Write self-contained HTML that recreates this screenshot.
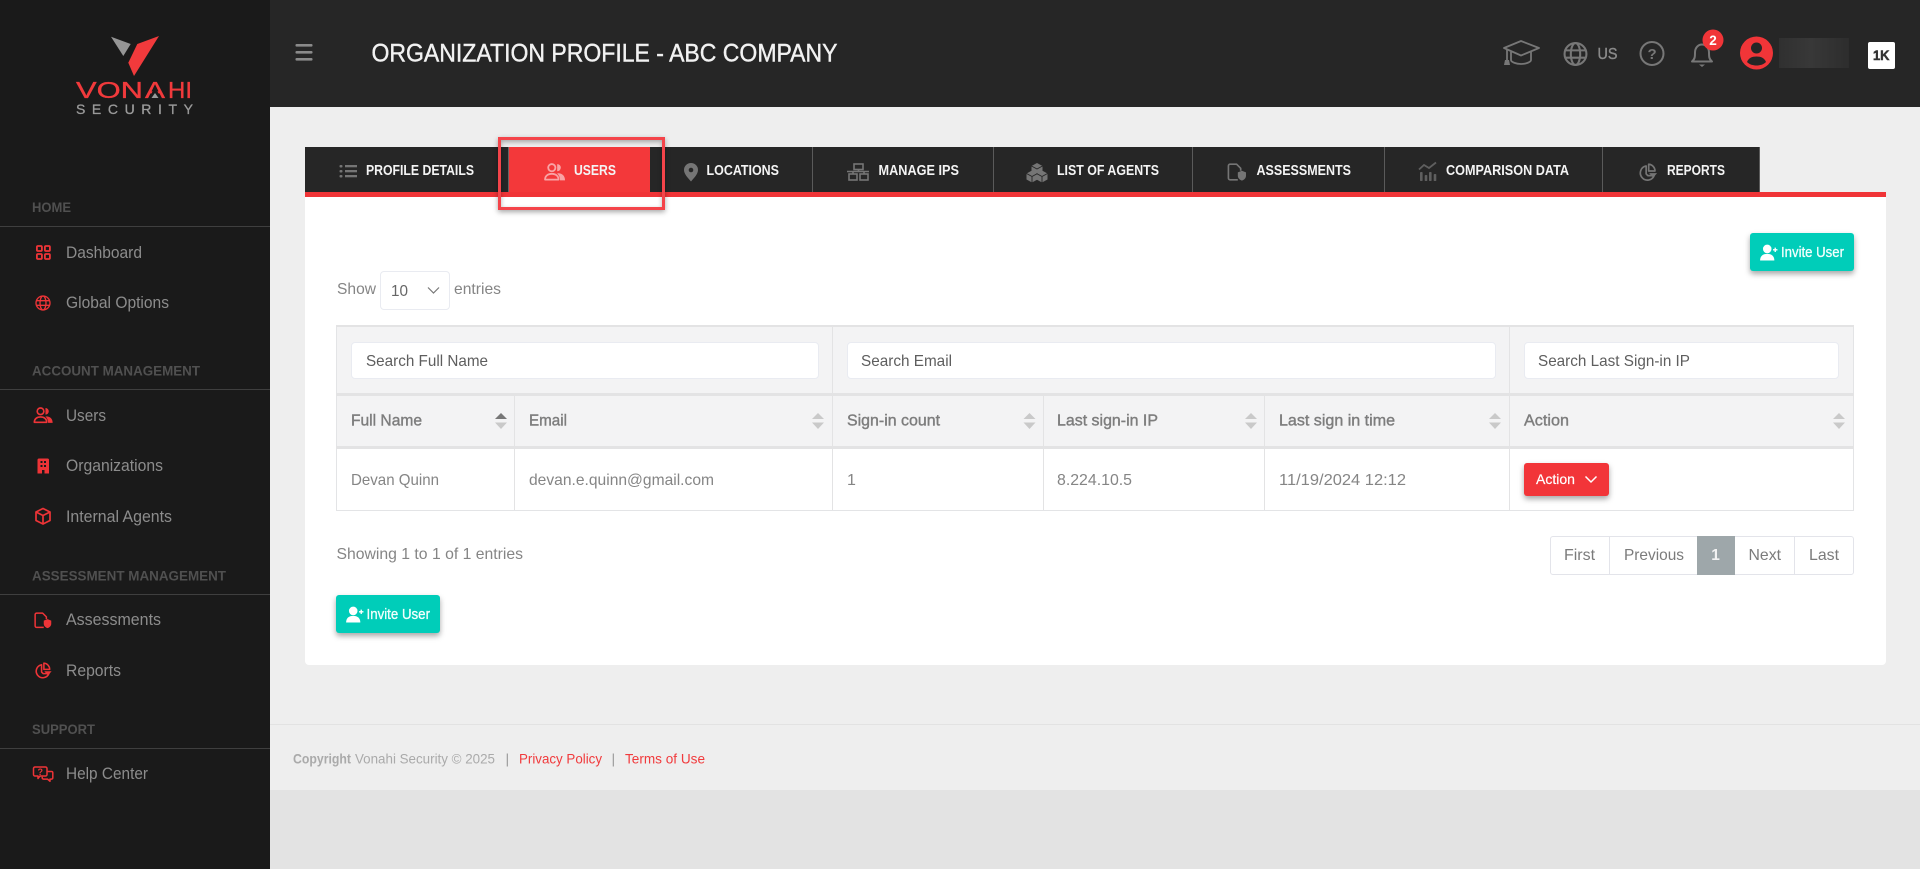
<!DOCTYPE html>
<html lang="en">
<head>
<meta charset="utf-8">
<title>Organization Profile - ABC Company</title>
<style>
html,body{margin:0;padding:0;width:1920px;height:869px;overflow:hidden;background:#eee;font-family:"Liberation Sans",sans-serif}
.b{position:absolute;box-sizing:border-box}
svg#t{position:absolute;left:0;top:0}
svg#t text{font-family:"Liberation Sans",sans-serif}
.nav{font-size:16.5px;fill:#8c8c8c}
.sec{font-size:13.5px;font-weight:700;fill:#505050}
.tab{font-size:14.5px;font-weight:700;fill:#f4f4f4}
.th{font-size:16px;fill:#7d7d7d;stroke:#7d7d7d;stroke-width:.4px}
.td{font-size:16px;fill:#858585}
.ph{font-size:16px;fill:#5e5e5e}
.pg{font-size:16px;fill:#7b7b7b}
.ft{font-size:14px;fill:#aaa}
.inv{font-size:15px;fill:#f2fffd;stroke:#f2fffd;stroke-width:.3px}
</style>
</head>
<body>
<div class="b" style="left:0;top:0;width:270px;height:869px;background:#1a1a1a"></div>
<div class="b" style="left:0;top:226px;width:270px;height:1px;background:#3f3f3f"></div>
<div class="b" style="left:0;top:389px;width:270px;height:1px;background:#3f3f3f"></div>
<div class="b" style="left:0;top:594px;width:270px;height:1px;background:#3f3f3f"></div>
<div class="b" style="left:0;top:748px;width:270px;height:1px;background:#3f3f3f"></div>
<div class="b" style="left:270px;top:0;width:1650px;height:107px;background:#262626"></div>
<div class="b" style="left:1779px;top:38px;width:70px;height:30px;background:linear-gradient(90deg,#303030,#383838 45%,#2d2d2d)"></div>
<div class="b" style="left:1868px;top:42px;width:27px;height:27px;background:#fff;border-radius:2px"></div>

<div class="b" style="left:305px;top:197px;width:1581px;height:468px;background:#fff;border-radius:0 0 4px 4px"></div>
<div class="b" style="left:305px;top:147px;width:1454px;height:45px;background:#262626"></div>
<div class="b" style="left:508px;top:147px;width:1px;height:45px;background:#666"></div>
<div class="b" style="left:509px;top:147px;width:141px;height:45px;background:#f3383a"></div>
<div class="b" style="left:812px;top:147px;width:1px;height:45px;background:#5a5a5a"></div>
<div class="b" style="left:993px;top:147px;width:1px;height:45px;background:#5a5a5a"></div>
<div class="b" style="left:1192px;top:147px;width:1px;height:45px;background:#5a5a5a"></div>
<div class="b" style="left:1384px;top:147px;width:1px;height:45px;background:#5a5a5a"></div>
<div class="b" style="left:1602px;top:147px;width:1px;height:45px;background:#5a5a5a"></div>
<div class="b" style="left:1759px;top:147px;width:1px;height:45px;background:#5a5a5a"></div>
<div class="b" style="left:305px;top:192px;width:1581px;height:5px;background:#f03437"></div>
<div class="b" style="left:498px;top:137px;width:167px;height:73px;border:3px solid #f4444a;box-shadow:0 2px 5px rgba(0,0,0,.35),inset 0 2px 5px rgba(0,0,0,.3)"></div>

<div class="b" style="left:1750px;top:233px;width:104px;height:38px;background:#00cdb9;border-radius:3px;box-shadow:0 3px 6px rgba(0,0,0,.35)"></div>
<div class="b" style="left:380px;top:271px;width:70px;height:39px;background:#fff;border:1px solid #e9ebf1;border-radius:4px"></div>

<div class="b" style="left:336px;top:325px;width:1518px;height:186px;background:#fff;border:1px solid #e3e4e6"></div>
<div class="b" style="left:337px;top:326px;width:1516px;height:120px;background:#f3f3f4"></div>
<div class="b" style="left:336px;top:325px;width:1518px;height:2px;background:#e3e3e4"></div>
<div class="b" style="left:336px;top:393px;width:1518px;height:3px;background:#e3e3e4"></div>
<div class="b" style="left:336px;top:446px;width:1518px;height:3px;background:#e3e3e4"></div>
<div class="b" style="left:514px;top:396px;width:1px;height:114px;background:#e3e3e4"></div>
<div class="b" style="left:832px;top:327px;width:1px;height:183px;background:#e3e3e4"></div>
<div class="b" style="left:1043px;top:396px;width:1px;height:114px;background:#e3e3e4"></div>
<div class="b" style="left:1264px;top:396px;width:1px;height:114px;background:#e3e3e4"></div>
<div class="b" style="left:1509px;top:327px;width:1px;height:183px;background:#e3e3e4"></div>
<div class="b" style="left:351px;top:342px;width:468px;height:37px;background:#fff;border:1px solid #e9ebf1;border-radius:4px"></div>
<div class="b" style="left:847px;top:342px;width:649px;height:37px;background:#fff;border:1px solid #e9ebf1;border-radius:4px"></div>
<div class="b" style="left:1524px;top:342px;width:315px;height:37px;background:#fff;border:1px solid #e9ebf1;border-radius:4px"></div>
<div class="b" style="left:1524px;top:463px;width:85px;height:33px;background:#f23539;border-radius:3px;box-shadow:0 3px 6px rgba(0,0,0,.35)"></div>

<div class="b" style="left:1550px;top:536px;width:304px;height:39px;background:#fff;border:1px solid #e3e4ea;border-radius:3px"></div>
<div class="b" style="left:1609px;top:536px;width:1px;height:39px;background:#e3e4ea"></div>
<div class="b" style="left:1697px;top:536px;width:38px;height:39px;background:#9ea7aa"></div>
<div class="b" style="left:1794px;top:536px;width:1px;height:39px;background:#e3e4ea"></div>
<div class="b" style="left:336px;top:595px;width:104px;height:38px;background:#00cdb9;border-radius:3px;box-shadow:0 3px 6px rgba(0,0,0,.35)"></div>

<div class="b" style="left:270px;top:724px;width:1650px;height:1px;background:#e2e2e2"></div>
<div class="b" style="left:270px;top:790px;width:1650px;height:79px;background:#e3e3e3"></div>

<svg id="t" width="1920" height="869" viewBox="0 0 1920 869" xmlns="http://www.w3.org/2000/svg">
<defs>
<symbol id="users" viewBox="0 0 24 20"><circle cx="9" cy="5.2" r="4" fill="none" stroke="currentColor" stroke-width="2"/><path d="M15 1.2a4 4 0 1 1 0 8z" fill="currentColor"/><path d="M1.5 18.500c0-4 3-6.500 7.500-6.500s7.500 2.500 7.500 6.500z" fill="none" stroke="currentColor" stroke-width="2" stroke-linejoin="round"/><path d="M15 11.500c5-.6 8.700 2.400 8.700 7.800h-5.500c0-3-1.200-5.800-3.200-7.800z" fill="currentColor"/></symbol>
<symbol id="doc" viewBox="0 0 24 22"><path d="M13 20.500H3.500a2 2 0 0 1-2-2v-15a2 2 0 0 1 2-2h8l5 5v3" fill="none" stroke="currentColor" stroke-width="2" stroke-linejoin="round"/><path d="M18 9.500l5 2v4c0 3-2.200 5.200-5 6-2.800-.8-5-3-5-6v-4z" fill="currentColor"/></symbol>
<symbol id="pie" viewBox="0 0 22 22"><path d="M8.500 3.500a8.500 8.500 0 1 0 9.500 11.500h-7.500l-2-2z" fill="none" stroke="currentColor" stroke-width="2" stroke-linejoin="round"/><path d="M11.500 1.500a8 8 0 0 1 7.500 8h-7.500z" fill="none" stroke="currentColor" stroke-width="2" stroke-linejoin="round"/><path d="M12 12h9.500l-4.700 5.500z" fill="currentColor"/></symbol>
<symbol id="globe" viewBox="0 0 24 24"><g fill="none" stroke="currentColor" stroke-width="2"><circle cx="12" cy="12" r="10.500"/><ellipse cx="12" cy="12" rx="4.500" ry="10.500"/><path d="M2 8.500h20M2 15.500h20"/></g></symbol>
<symbol id="plus" viewBox="0 0 20 18"><circle cx="8" cy="5" r="4.800" fill="currentColor"/><path d="M0 18c0-5 3-7.500 8-7.500s8 2.500 8 7.500z" fill="currentColor"/><path d="M14.500 6h5M17 3.500v5" stroke="currentColor" stroke-width="1.500" fill="none"/></symbol>
</defs>

<!-- logo -->
<g>
<path d="M111 36.700l19.700 7.300-7.400 12z" fill="#969696"/>
<path d="M159 36l-21.700 8-9 18.700 5.700 13.300z" fill="#f13a3c"/>
<g font-size="23" fill="#f13a3c" stroke="#f13a3c" stroke-width=".35">
<text x="76" y="98" textLength="67" lengthAdjust="spacingAndGlyphs">VON</text>
<text x="145" y="98" textLength="20" lengthAdjust="spacingAndGlyphs">A</text>
<text x="168" y="98" textLength="24" lengthAdjust="spacingAndGlyphs">HI</text>
</g>
<path d="M149 98.500L155 86.500l6 12z" fill="#1a1a1a"/>
<path d="M151.500 98l3.500-5 3.500 5z" fill="#9a9a9a"/>
<text x="76" y="114" font-size="14" fill="#9a9a9a" stroke="#9a9a9a" stroke-width=".3" textLength="117" lengthAdjust="spacing">SECURITY</text>
</g>

<!-- sidebar text -->
<text class="sec" x="32" y="212" textLength="39" lengthAdjust="spacingAndGlyphs">HOME</text>
<text class="nav" x="66" y="258" textLength="76" lengthAdjust="spacingAndGlyphs">Dashboard</text>
<text class="nav" x="66" y="308" textLength="103" lengthAdjust="spacingAndGlyphs">Global Options</text>
<text class="sec" x="32" y="375.500" textLength="168" lengthAdjust="spacingAndGlyphs">ACCOUNT MANAGEMENT</text>
<text class="nav" x="66" y="421" textLength="40" lengthAdjust="spacingAndGlyphs">Users</text>
<text class="nav" x="66" y="471" textLength="97" lengthAdjust="spacingAndGlyphs">Organizations</text>
<text class="nav" x="66" y="522" textLength="106" lengthAdjust="spacingAndGlyphs">Internal Agents</text>
<text class="sec" x="32" y="580.500" textLength="194" lengthAdjust="spacingAndGlyphs">ASSESSMENT MANAGEMENT</text>
<text class="nav" x="66" y="625" textLength="95" lengthAdjust="spacingAndGlyphs">Assessments</text>
<text class="nav" x="66" y="676" textLength="55" lengthAdjust="spacingAndGlyphs">Reports</text>
<text class="sec" x="32" y="734" textLength="63" lengthAdjust="spacingAndGlyphs">SUPPORT</text>
<text class="nav" x="66" y="779" textLength="82" lengthAdjust="spacingAndGlyphs">Help Center</text>

<!-- sidebar icons -->
<g style="color:#ee3437">
<g fill="none" stroke="currentColor" stroke-width="1.800"><rect x="36.900" y="246" width="5" height="5" rx="1"/><rect x="44.900" y="246" width="5" height="5" rx="1"/><rect x="36.900" y="254" width="5" height="5" rx="1"/><rect x="44.900" y="254" width="5" height="5" rx="1"/></g>
<use href="#globe" x="35" y="295" width="16" height="16"/>
<use href="#users" x="33" y="407" width="20" height="16.500"/>
<path d="M37.500 460a1.500 1.500 0 0 1 1.500-1.500h8.500a1.500 1.500 0 0 1 1.500 1.500v13.500h-4.500v-3.500h-2.500v3.500h-4.500z" fill="currentColor"/>
<g fill="#1a1a1a"><rect x="40.500" y="461" width="2" height="2"/><rect x="44" y="461" width="2" height="2"/><rect x="40.500" y="465" width="2" height="2"/><rect x="44" y="465" width="2" height="2"/></g>
<g fill="none" stroke="currentColor" stroke-width="1.700" stroke-linejoin="round"><path d="M43 508.500l7 3.500v8.500l-7 3.500-7-3.500V512z"/><path d="M36 512l7 3.500 7-3.500M43 515.500V524"/></g>
<use href="#doc" x="34" y="612" width="18" height="16.500"/>
<use href="#pie" x="35" y="662" width="17" height="17"/>
<g fill="none" stroke="currentColor" stroke-width="1.500" stroke-linejoin="round"><path d="M35 767h10.500a1.500 1.500 0 0 1 1.500 1.500v6a1.500 1.500 0 0 1-1.500 1.500H40l-2 2.500V776h-3a1.500 1.500 0 0 1-1.500-1.500v-6A1.500 1.500 0 0 1 35 767z"/><path d="M47.500 771.500h4a1.300 1.300 0 0 1 1.300 1.300v5a1.300 1.300 0 0 1-1.300 1.300h-1.500v2.200l-2.500-2.200h-4a1.300 1.300 0 0 1-1.300-1.300v-1"/></g>
<text x="37.500" y="775" font-size="9" font-weight="700" fill="currentColor">?</text>
</g>

<!-- header -->
<g fill="#8a8a8a"><rect x="295.500" y="44" width="17" height="2.600" rx="1"/><rect x="295.500" y="51" width="17" height="2.600" rx="1"/><rect x="295.500" y="58" width="17" height="2.600" rx="1"/></g>
<text x="371.500" y="61.700" font-size="25" fill="#f2f2f2" stroke="#f2f2f2" stroke-width=".4" textLength="466" lengthAdjust="spacingAndGlyphs">ORGANIZATION PROFILE - ABC COMPANY</text>

<g style="color:#777">
<g fill="none" stroke="currentColor" stroke-width="1.800" stroke-linejoin="round"><path d="M1521 41l18 7-18 7.500-17-7.500z"/><path d="M1511 52v8c0 2 5 4 10 4s10-2 10-4v-8"/><path d="M1507 50v10"/></g>
<path d="M1505 60h4l1 5h-6z" fill="currentColor"/>
<use href="#globe" x="1563" y="41.500" width="25" height="25"/>
<circle cx="1652" cy="53.500" r="11.500" fill="none" stroke="currentColor" stroke-width="2"/>
<text x="1647.500" y="59" font-size="15" font-weight="700" fill="currentColor">?</text>
<path d="M1692 61.500c3-2.500 3-5 3-9 0-4.500 3-8 7-8s7 3.500 7 8c0 4 0 6.500 3 9z" fill="none" stroke="currentColor" stroke-width="2" stroke-linejoin="round"/>
<path d="M1699 64.500h6l-3 2.500z" fill="currentColor"/>
</g>
<text x="1597.500" y="59" font-size="16" fill="#8a8a8a" stroke="#8a8a8a" stroke-width=".4" textLength="20" lengthAdjust="spacingAndGlyphs">US</text>
<circle cx="1713" cy="40" r="10.500" fill="#f13538"/>
<text x="1713" y="45" font-size="13.500" font-weight="700" fill="#fff" text-anchor="middle">2</text>
<circle cx="1756.500" cy="53" r="16.500" fill="#f13538"/>
<circle cx="1756.500" cy="48" r="5.500" fill="#262626"/>
<path d="M1747 62c1.500-4 5-5.500 9.500-5.500s8 1.500 9.500 5.500c-2.500 2.500-6 3.500-9.500 3.500s-7-1-9.500-3.500z" fill="#262626"/>
<text x="1873" y="60" font-size="14" font-weight="700" fill="#333" stroke="#333" stroke-width=".5" textLength="16.500" lengthAdjust="spacingAndGlyphs">1K</text>

<!-- tabs -->
<text class="tab" x="366" y="175" textLength="108" lengthAdjust="spacingAndGlyphs">PROFILE DETAILS</text>
<text class="tab" x="574" y="175" textLength="42" lengthAdjust="spacingAndGlyphs">USERS</text>
<text class="tab" x="706.500" y="175" textLength="72.500" lengthAdjust="spacingAndGlyphs">LOCATIONS</text>
<text class="tab" x="878.500" y="175" textLength="80.500" lengthAdjust="spacingAndGlyphs">MANAGE IPS</text>
<text class="tab" x="1057" y="175" textLength="102" lengthAdjust="spacingAndGlyphs">LIST OF AGENTS</text>
<text class="tab" x="1256.500" y="175" textLength="94.500" lengthAdjust="spacingAndGlyphs">ASSESSMENTS</text>
<text class="tab" x="1446" y="175" textLength="123" lengthAdjust="spacingAndGlyphs">COMPARISON DATA</text>
<text class="tab" x="1667" y="175" textLength="58" lengthAdjust="spacingAndGlyphs">REPORTS</text>

<!-- tab icons -->
<g style="color:#757575">
<g fill="currentColor"><rect x="339.500" y="165" width="3" height="2.500" rx="1"/><rect x="339.500" y="170" width="3" height="2.500" rx="1"/><rect x="339.500" y="175" width="3" height="2.500" rx="1"/><rect x="345" y="165" width="12" height="2.300"/><rect x="345" y="170" width="12" height="2.300"/><rect x="345" y="175" width="12" height="2.300"/></g>
<path d="M691 163a7 7 0 0 1 7 7c0 4-4 8-7 11.500-3-3.500-7-7.500-7-11.500a7 7 0 0 1 7-7z" fill="currentColor"/><circle cx="691" cy="170" r="2.300" fill="#262626"/>
<g fill="none" stroke="currentColor" stroke-width="1.600"><rect x="854" y="164" width="9" height="5.500"/><rect x="849" y="174" width="8" height="6"/><rect x="860" y="174" width="8" height="6"/><path d="M847 171.500h22M858.500 169.500v2M853 171.500v2.500M864 171.500v2.500"/></g>
<g fill="currentColor"><path d="M1037 163l5.500 3v6l-5.500 3-5.500-3v-6z"/><path d="M1032 170.500l5.500 3v6l-5.500 3-5.500-3v-6z"/><path d="M1042 170.500l5.500 3v6l-5.500 3-5.500-3v-6z"/></g>
<g stroke="#262626" stroke-width=".9" fill="none"><path d="M1031.500 166l5.500 3 5.500-3M1026.500 173.500l5.500 3 5.500-3M1036.500 173.500l5.500 3 5.500-3M1032 176.500v6M1042 176.500v6"/></g>
<use href="#doc" x="1227" y="163" width="20" height="18"/>
<g fill="#5f5f5f"><rect x="1420" y="172" width="2.600" height="9" rx=".8"/><rect x="1424.700" y="175" width="2.600" height="6" rx=".8"/><rect x="1429" y="172" width="2.600" height="9" rx=".8"/><rect x="1433.700" y="174" width="2.600" height="7" rx=".8"/></g>
<path d="M1419 169.500l5-4.500 5 3 7-5.500" fill="none" stroke="#5f5f5f" stroke-width="1.800"/>
<use href="#pie" x="1639" y="163" width="18.500" height="18.500"/>
</g>
<use href="#users" x="543" y="163" width="23" height="18" style="color:#f9a3a5"/>

<!-- invite top -->
<use href="#plus" x="1760" y="244.500" width="18" height="16" style="color:#fff"/>
<text class="inv" x="1781" y="257" textLength="63" lengthAdjust="spacingAndGlyphs">Invite User</text>

<!-- show entries -->
<text class="td" x="337" y="294" textLength="39" lengthAdjust="spacingAndGlyphs">Show</text>
<text class="td" x="391" y="296" style="fill:#666" textLength="17" lengthAdjust="spacingAndGlyphs">10</text>
<path d="M428 287.500l5.500 5.500 5.500-5.500" fill="none" stroke="#777" stroke-width="1.200"/>
<text class="td" x="454" y="294" textLength="47" lengthAdjust="spacingAndGlyphs">entries</text>

<!-- filters -->
<text class="ph" x="366" y="366" textLength="122" lengthAdjust="spacingAndGlyphs">Search Full Name</text>
<text class="ph" x="861" y="366" textLength="91" lengthAdjust="spacingAndGlyphs">Search Email</text>
<text class="ph" x="1538" y="366" textLength="152" lengthAdjust="spacingAndGlyphs">Search Last Sign-in IP</text>

<!-- header row -->
<text class="th" x="351" y="425.700" textLength="71" lengthAdjust="spacingAndGlyphs">Full Name</text>
<text class="th" x="529" y="425.700" textLength="38" lengthAdjust="spacingAndGlyphs">Email</text>
<text class="th" x="847" y="425.700" textLength="93" lengthAdjust="spacingAndGlyphs">Sign-in count</text>
<text class="th" x="1057" y="425.700" textLength="101" lengthAdjust="spacingAndGlyphs">Last sign-in IP</text>
<text class="th" x="1279" y="425.700" textLength="116" lengthAdjust="spacingAndGlyphs">Last sign in time</text>
<text class="th" x="1524" y="425.700" textLength="45" lengthAdjust="spacingAndGlyphs">Action</text>
<path d="M495 419l6-6 6 6z" fill="#777"/><path d="M495 422.500l6 6.500 6-6.500z" fill="#c9c9c9"/>
<g fill="#c9c9c9">
<path d="M812 419l6-6 6 6zM812 422.500l6 6.500 6-6.500z"/>
<path d="M1023.500 419l6-6 6 6zM1023.500 422.500l6 6.500 6-6.500z"/>
<path d="M1245 419l6-6 6 6zM1245 422.500l6 6.500 6-6.500z"/>
<path d="M1489 419l6-6 6 6zM1489 422.500l6 6.500 6-6.500z"/>
<path d="M1833 419l6-6 6 6zM1833 422.500l6 6.500 6-6.500z"/>
</g>

<!-- body row -->
<text class="td" x="351" y="485" textLength="88" lengthAdjust="spacingAndGlyphs">Devan Quinn</text>
<text class="td" x="529" y="485" textLength="185" lengthAdjust="spacingAndGlyphs">devan.e.quinn@gmail.com</text>
<text class="td" x="847" y="485">1</text>
<text class="td" x="1057" y="485" textLength="75" lengthAdjust="spacingAndGlyphs">8.224.10.5</text>
<text class="td" x="1279" y="485" textLength="127" lengthAdjust="spacingAndGlyphs">11/19/2024 12:12</text>
<text x="1536" y="484" font-size="14" fill="#fff" stroke="#fff" stroke-width=".2" textLength="39" lengthAdjust="spacingAndGlyphs">Action</text>
<path d="M1585.500 476.500l5.500 5.500 5.500-5.500" fill="none" stroke="#fff" stroke-width="1.500"/>

<!-- info + pagination -->
<text class="td" x="336.500" y="559" textLength="186.500" lengthAdjust="spacingAndGlyphs">Showing 1 to 1 of 1 entries</text>
<text class="pg" x="1564" y="560.200" textLength="31" lengthAdjust="spacingAndGlyphs">First</text>
<text class="pg" x="1624" y="560.200" textLength="60" lengthAdjust="spacingAndGlyphs">Previous</text>
<text x="1715.500" y="560.200" font-size="15.500" font-weight="700" fill="#f2f2f2" text-anchor="middle">1</text>
<text class="pg" x="1748.500" y="560.200" textLength="32.500" lengthAdjust="spacingAndGlyphs">Next</text>
<text class="pg" x="1809" y="560.200" textLength="30" lengthAdjust="spacingAndGlyphs">Last</text>

<!-- invite bottom -->
<use href="#plus" x="346" y="606.500" width="18" height="16" style="color:#fff"/>
<text class="inv" x="366.500" y="619" textLength="63.500" lengthAdjust="spacingAndGlyphs">Invite User</text>

<!-- footer -->
<text class="ft" x="293" y="763.300" font-weight="700" textLength="58" lengthAdjust="spacingAndGlyphs">Copyright</text>
<text class="ft" x="355" y="763.300" textLength="140" lengthAdjust="spacingAndGlyphs">Vonahi Security © 2025</text>
<text class="ft" x="505.500" y="763.300" style="fill:#999">|</text>
<text class="ft" x="519" y="763.300" style="fill:#f13a3c" textLength="83" lengthAdjust="spacingAndGlyphs">Privacy Policy</text>
<text class="ft" x="611.500" y="763.300" style="fill:#999">|</text>
<text class="ft" x="625" y="763.300" style="fill:#f13a3c" textLength="80" lengthAdjust="spacingAndGlyphs">Terms of Use</text>
</svg>
</body>
</html>
